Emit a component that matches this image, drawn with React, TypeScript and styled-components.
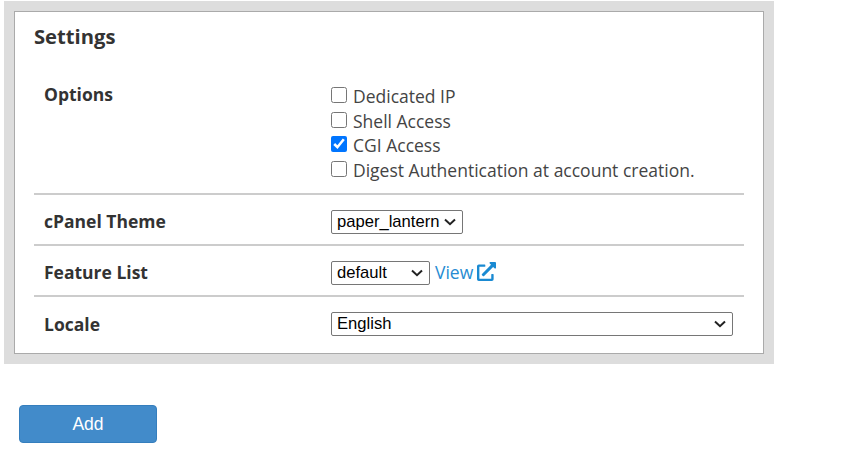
import React from 'react';
import styled, { createGlobalStyle } from 'styled-components';
import { FaExternalLinkAlt } from 'react-icons/fa';

const GlobalStyle = createGlobalStyle`
  html, body {
    margin: 0;
    padding: 0;
    background: #ffffff;
    font-family: "Open Sans", sans-serif;
    color: #333333;
  }
`;

const Page = styled.div`
  padding: 1px 0 0 4px;
  width: 770px;
`;

const Panel = styled.section`
  border: 10px solid #dddddd;
  width: 770px;
  height: 363px;
  box-sizing: border-box;
`;

const PanelInner = styled.div`
  border: 1px solid #aaaaaa;
  height: 100%;
  box-sizing: border-box;
  padding: 0 19px;
`;

const Title = styled.h2`
  margin: 0;
  padding-top: 11px;
  height: 59px;
  box-sizing: border-box;
  font-size: 20.2px;
  line-height: 27px;
  font-weight: 700;
  color: #333333;
`;

const Row = styled.div<{ $height: number; $last?: boolean }>`
  display: grid;
  grid-template-columns: 297px 1fr;
  height: ${props => props.$height}px;
  box-sizing: border-box;
  border-bottom: ${props => (props.$last ? 'none' : '2px solid #cccccc')};
`;

const Label = styled.div<{ $top: number }>`
  padding: ${props => props.$top}px 0 0 10px;
  font-size: 17.5px;
  line-height: 22px;
  font-weight: 700;
  color: #333333;
`;

const Value = styled.div<{ $top: number }>`
  padding-top: ${props => props.$top}px;
  display: flex;
  align-items: flex-start;
`;

const OptionList = styled.div`
  display: flex;
  flex-direction: column;
`;

const Option = styled.label`
  display: flex;
  align-items: center;
  height: 24.5px;
  font-size: 17.5px;
  color: #444444;
`;

const Checkbox = styled.input`
  width: 16px;
  height: 16px;
  margin: 0 6px 2px 0;
`;

const chevron =
  "data:image/svg+xml,%3Csvg xmlns='http://www.w3.org/2000/svg' width='12' height='8' viewBox='0 0 12 8'%3E%3Cpath d='M1 1.5L6 6.2L11 1.5' fill='none' stroke='%23222222' stroke-width='2'/%3E%3C/svg%3E";

const Select = styled.select<{ $width: number }>`
  appearance: none;
  width: ${props => props.$width}px;
  height: 24px;
  font-family: "Liberation Sans", Arial, sans-serif;
  font-size: 16.6px;
  color: #000000;
  background: #ffffff url("${chevron}") no-repeat right 6px center;
  border: 1px solid #767676;
  border-radius: 2px;
  padding: 0 0 1px 5px;
`;

const ViewLink = styled.a`
  display: flex;
  align-items: center;
  gap: 4px;
  margin-left: 5px;
  height: 21px;
  font-size: 17.5px;
  color: #268bd2;
  text-decoration: none;
`;

const ExternalIcon = styled(FaExternalLinkAlt)`
  width: 19px;
  height: 19px;
  color: #1a8ad2;
`;

const ButtonBar = styled.div`
  padding: 41px 0 0 15px;
`;

const AddButton = styled.button`
  width: 138px;
  height: 38px;
  background: #428bca;
  border: 1px solid #357ebd;
  border-radius: 4px;
  color: #ffffff;
  font-family: "Liberation Sans", Arial, sans-serif;
  font-size: 17.5px;
`;

const options = [
  { label: 'Dedicated IP', checked: false },
  { label: 'Shell Access', checked: false },
  { label: 'CGI Access', checked: true },
  { label: 'Digest Authentication at account creation.', checked: false },
];

const App: React.FC = () => (
  <Page>
    <GlobalStyle />
    <Panel>
      <PanelInner>
        <Title>Settings</Title>
        <Row $height={124}>
          <Label $top={12}>Options</Label>
          <Value $top={13}>
            <OptionList>
              {options.map(option => (
                <Option key={option.label}>
                  <Checkbox type="checkbox" defaultChecked={option.checked} />
                  {option.label}
                </Option>
              ))}
            </OptionList>
          </Value>
        </Row>
        <Row $height={51}>
          <Label $top={15}>cPanel Theme</Label>
          <Value $top={15}>
            <Select $width={132} defaultValue="paper_lantern">
              <option>paper_lantern</option>
            </Select>
          </Value>
        </Row>
        <Row $height={51}>
          <Label $top={15}>Feature List</Label>
          <Value $top={15}>
            <Select $width={99} defaultValue="default">
              <option>default</option>
            </Select>
            <ViewLink href="#">
              View
              <ExternalIcon />
            </ViewLink>
          </Value>
        </Row>
        <Row $height={45} $last>
          <Label $top={16}>Locale</Label>
          <Value $top={15}>
            <Select $width={402} defaultValue="English">
              <option>English</option>
            </Select>
          </Value>
        </Row>
      </PanelInner>
    </Panel>
    <ButtonBar>
      <AddButton type="button">Add</AddButton>
    </ButtonBar>
  </Page>
);

export default App;
